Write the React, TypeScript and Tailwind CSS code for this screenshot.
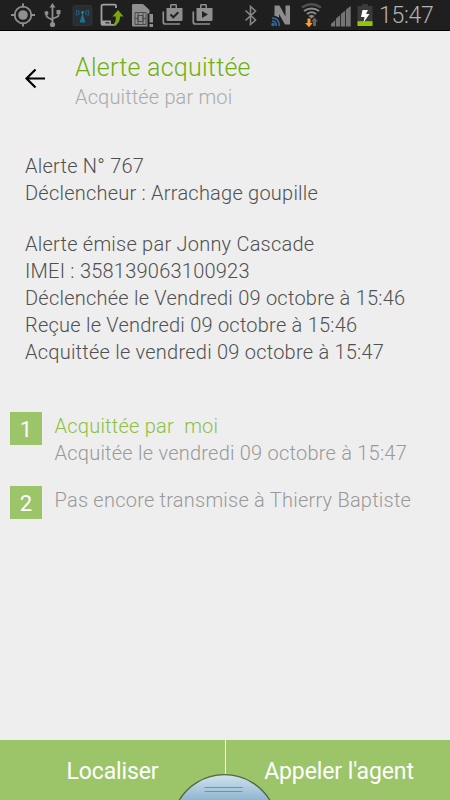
import type { ReactNode } from "react";

type Step = {
  rank: number;
  title: string;
  detail?: string;
  done?: boolean;
};

const alertLines = [
  "Alerte N° 767",
  "Déclencheur : Arrachage goupille",
];

const detailLines = [
  "Alerte émise par Jonny Cascade",
  "IMEI : 358139063100923",
  "Déclenchée le Vendredi 09 octobre à 15:46",
  "Reçue le Vendredi 09 octobre à 15:46",
  "Acquittée le vendredi 09 octobre à 15:47",
];

const steps: Step[] = [
  {
    rank: 1,
    title: "Acquittée par  moi",
    detail: "Acquitée le vendredi 09 octobre à 15:47",
    done: true,
  },
  { rank: 2, title: "Pas encore transmise à Thierry Baptiste" },
];

function Glyph({ children }: { children: ReactNode }) {
  return (
    <svg width="30" height="30" viewBox="0 0 30 30" fill="none" className="shrink-0">
      {children}
    </svg>
  );
}

function StatusBar() {
  return (
    <div className="flex h-[31px] shrink-0 items-start border-b border-black bg-[#1f1f1f] pl-2">
      {/* GPS */}
      <Glyph>
        <circle cx="15" cy="15" r="8.3" stroke="#8f8f8f" strokeWidth="1.8" />
        <circle cx="15" cy="15" r="4.8" fill="#8f8f8f" />
        <path d="M15 3.5v4M15 22.5v4M3 15h4.5M22.5 15H27" stroke="#8f8f8f" strokeWidth="2" />
      </Glyph>
      {/* USB */}
      <Glyph>
        <path d="M14.5 6v18M8.5 12v4c0 2 6 2.5 6 5M20.5 12v3.5c0 2-6 2-6 4" stroke="#8f8f8f" strokeWidth="1.8" />
        <path d="M14.5 3l3 4.5h-6z" fill="#8f8f8f" />
        <circle cx="8.5" cy="13" r="2" fill="#8f8f8f" />
        <path d="M18.5 10h4v4h-4z" fill="#8f8f8f" />
        <circle cx="14.5" cy="24.5" r="2.6" fill="#8f8f8f" />
      </Glyph>
      {/* Antenna app */}
      <Glyph>
        <rect x="5" y="5.5" width="19" height="20" rx="1.5" fill="#292e32" stroke="#33383c" strokeWidth="0.7" />
        <path d="M14.5 13l3 9.5h-6z" fill="#216f94" />
        <circle cx="14.5" cy="12.5" r="1.4" fill="#2b80a4" />
        <path d="M11.5 10.5c-1 1.2-1 3 0 4.5M17.5 10.5c1 1.2 1 3 0 4.5M9.3 9.5c-1.2 2-1.2 4.5 0 6.5M19.7 9.5c1.2 2 1.2 4.5 0 6.5" stroke="#235a74" strokeWidth="1.3" />
      </Glyph>
      {/* Phone transfer */}
      <Glyph>
        <path d="M18 8V6.2C18 5 17.5 4.7 16.5 4.7H5.2C4 4.7 3.5 5.2 3.5 6.2v17c0 1.2.5 1.7 1.7 1.7h10.3c1.5 0 2.5-.5 2.5-2" stroke="#a0a0a0" strokeWidth="1.8" />
        <path d="M3.5 20.5H13V25H4z" fill="#a0a0a0" />
        <path d="M7.5 22.8h4" stroke="#222" strokeWidth="1.2" />
        <path d="M20 10l5.5 6.5H22c0 6-3 9-8.5 9.5 3.5-2 4.5-5 4.3-9.5h-3.3z" fill="#7aa50d" />
      </Glyph>
      {/* SIM alert */}
      <Glyph>
        <path d="M5.5 4H15l6.5 6v3.5h-2v13h-14c-1 0-1.5-.5-1.5-1.5V5.500C4 4.500 4.500 4 5.500 4z" fill="#8f8f8f" />
        <path d="M7 12.5h11v12H7zM10 12.5v12M15 12.5v12M7 18.5h3M15 18.5h3M10 15.5h5v6h-5z" stroke="#444" strokeWidth="0.9" />
        <path d="M21.5 14H25v8.5h-3.5zM21.5 24H25v3h-3.5z" fill="#8f8f8f" />
      </Glyph>
      {/* Play Store, update done */}
      <Glyph>
        <path d="M8.5 8H12V5.5C12 4.5 12.5 4 13.5 4h4c1 0 1.5.5 1.5 1.5V8h5.5v11.5c0 1-.5 1.5-1.5 1.5H10c-1 0-1.5-.5-1.5-1.5zM13.5 8h4V5.6h-4z" fill="#8f8f8f" fillRule="evenodd" />
        <path d="M5.3 11.500V22c0 1.500.5 2 2 2H22" stroke="#8f8f8f" strokeWidth="1.7" />
        <path d="M12.5 14.5l2.800 2.800 5-5" stroke="#222" strokeWidth="2" />
      </Glyph>
      {/* Play Store */}
      <Glyph>
        <path d="M8.5 8H12V5.5C12 4.5 12.5 4 13.5 4h4c1 0 1.5.5 1.5 1.5V8h5.5v11.5c0 1-.5 1.5-1.5 1.5H10c-1 0-1.5-.5-1.5-1.5zM13.5 8h4V5.6h-4z" fill="#8f8f8f" fillRule="evenodd" />
        <path d="M5.3 11.500V22c0 1.500.5 2 2 2H22" stroke="#8f8f8f" strokeWidth="1.7" />
        <path d="M14 11l6 3.5-6 3.5z" fill="#222" />
      </Glyph>

      <div className="ml-[17px] flex">
        {/* Bluetooth */}
        <Glyph>
          <path d="M10.5 10.5l10 9.5-5 4.500V6.500l5 4.500-10 9.500" stroke="#858585" strokeWidth="1.6" />
        </Glyph>
        {/* NFC */}
        <Glyph>
          <path d="M9.5 5.5h5l6 11v-11H25v19h-5L14 14v4c-1.5-1.5-3-2-4.500-2z" fill="#8c8c8c" />
          <circle cx="8" cy="24.5" r="1.8" fill="#31699c" />
          <path d="M7 21c2.8 0 4.3 1.8 4.3 5M7 18c4.5 0 7.3 3 7.3 8" stroke="#31699c" strokeWidth="1.7" />
        </Glyph>
        {/* Wi-Fi with traffic arrows */}
        <Glyph>
          <path d="M7 7.5c6-4 13-4 19 0" stroke="#505050" strokeWidth="2.4" />
          <path d="M9 11c4.5-3.5 10.5-3.5 15 0M12 14c3-2.3 6-2.3 9 0" stroke="#8c8c8c" strokeWidth="2" />
          <path d="M13.5 16c2-1.4 4-1.4 6 0l-3 2.5z" fill="#8c8c8c" />
          <path d="M12.5 18.5h3V23h2.200L14 27.300 10 23h2.500z" fill="#ff9d1f" />
          <path d="M19.5 17.5l3.500 4h-2V26h-3v-4.500h-2z" fill="#646464" />
        </Glyph>
        {/* Signal */}
        <Glyph>
          <path d="M6 26.5V24l4.200-4v6.500zM11 26.500v-8l4.200-3.500v11.500zM16 26.500V14l4.200-3.500v16zM21 26.500v-17L25.700 6v20.500z" fill="#747474" />
        </Glyph>
      </div>
      {/* Battery, charging */}
      <svg width="18" height="30" viewBox="0 0 18 30" className="ml-px shrink-0">
        <path d="M6 4h6v2h4.500v20H1.500V6H6z" fill="#3b3b3b" />
        <path d="M1.5 21.2h15V26h-15z" fill="#94c600" />
        <path d="M6.5 10H12l-2 4h3.500l-6 8.500 1-5.500H5z" fill="#fff" />
      </svg>
      <span className="ml-[5px] whitespace-nowrap text-[23px] font-light leading-[32px] tracking-[-0.3px] text-[#b4b4b4]">
        15:47
      </span>
    </div>
  );
}

function StepRow({ step }: { step: Step }) {
  return (
    <li className="flex gap-3">
      <div className="flex h-[33px] w-8 shrink-0 items-center justify-center bg-[#9cc56a] pt-[2px] text-[22px] text-white">
        {step.rank}
      </div>
      <div className="whitespace-pre pl-[0.5px] pt-px text-[20px] font-[350] leading-[27px] tracking-[0.23px] text-[#999]">
        <p className={step.done ? "text-[#8cc044]" : ""}>{step.title}</p>
        {step.detail && <p>{step.detail}</p>}
      </div>
    </li>
  );
}

export default function App() {
  return (
    <div className="flex h-[800px] w-[450px] flex-col overflow-hidden bg-[#eee] font-['Roboto',sans-serif]">
      <StatusBar />

      <header className="flex h-[90px] shrink-0 pl-[25px] pt-5">
        <button type="button" aria-label="Retour" className="mt-[17px] h-[22px] w-[22px] shrink-0">
          <svg width="22" height="22" viewBox="0 0 22 22" fill="none" stroke="#000" strokeWidth="2.2">
            <path d="M20 10.5H2M10.5 1.5l-9 9 9 9" />
          </svg>
        </button>
        <div className="ml-7 whitespace-nowrap font-[350]">
          <h1 className="pt-px text-[25px] leading-[32px] tracking-[0.25px] text-[#6fb00f]">Alerte acquittée</h1>
          <p className="-mt-px text-[20px] leading-[28px] tracking-[0.15px] text-[#aaa]">Acquittée par moi</p>
        </div>
      </header>

      <main className="flex-1">
        <section className="whitespace-nowrap pl-[25px] pt-8 text-[20px] font-[350] leading-[27px] tracking-[0.23px] text-[#505050]">
          {alertLines.map((line) => (
            <p key={line}>{line}</p>
          ))}
          <div className="mt-6">
            {detailLines.map((line) => (
              <p key={line}>{line}</p>
            ))}
          </div>
        </section>

        <ol className="flex flex-col gap-[19px] pl-2.5 pt-[46px]">
          {steps.map((step) => (
            <StepRow key={step.rank} step={step} />
          ))}
        </ol>
      </main>

      <footer className="relative flex h-[60px] shrink-0 bg-[#9cc56a] text-[23px] leading-[64px] text-white">
        <button type="button" className="w-[226px] border-r border-white text-center tracking-[-0.15px]">
          Localiser
        </button>
        <button type="button" className="flex-1 whitespace-nowrap pl-0.5 text-center tracking-[-0.1px]">
          Appeler l'agent
        </button>
        {/* drawer handle sits over both buttons */}
        <svg width="96" height="28" viewBox="0 0 96 28" className="absolute bottom-0 left-[177px]">
          <defs>
            <linearGradient id="handle" x1="0" y1="0" x2="0" y2="1">
              <stop offset="0" stopColor="#cfe3ee" />
              <stop offset="1" stopColor="#8fb5cf" />
            </linearGradient>
          </defs>
          <path
            d="M2 28.5A53 53 0 0 1 93 28.5"
            fill="url(#handle)"
            stroke="#52683c"
            strokeWidth="1.3"
          />
          <path d="M27.5 15.5h38M27.5 19.5h38" stroke="#6697b0" />
        </svg>
      </footer>
    </div>
  );
}
